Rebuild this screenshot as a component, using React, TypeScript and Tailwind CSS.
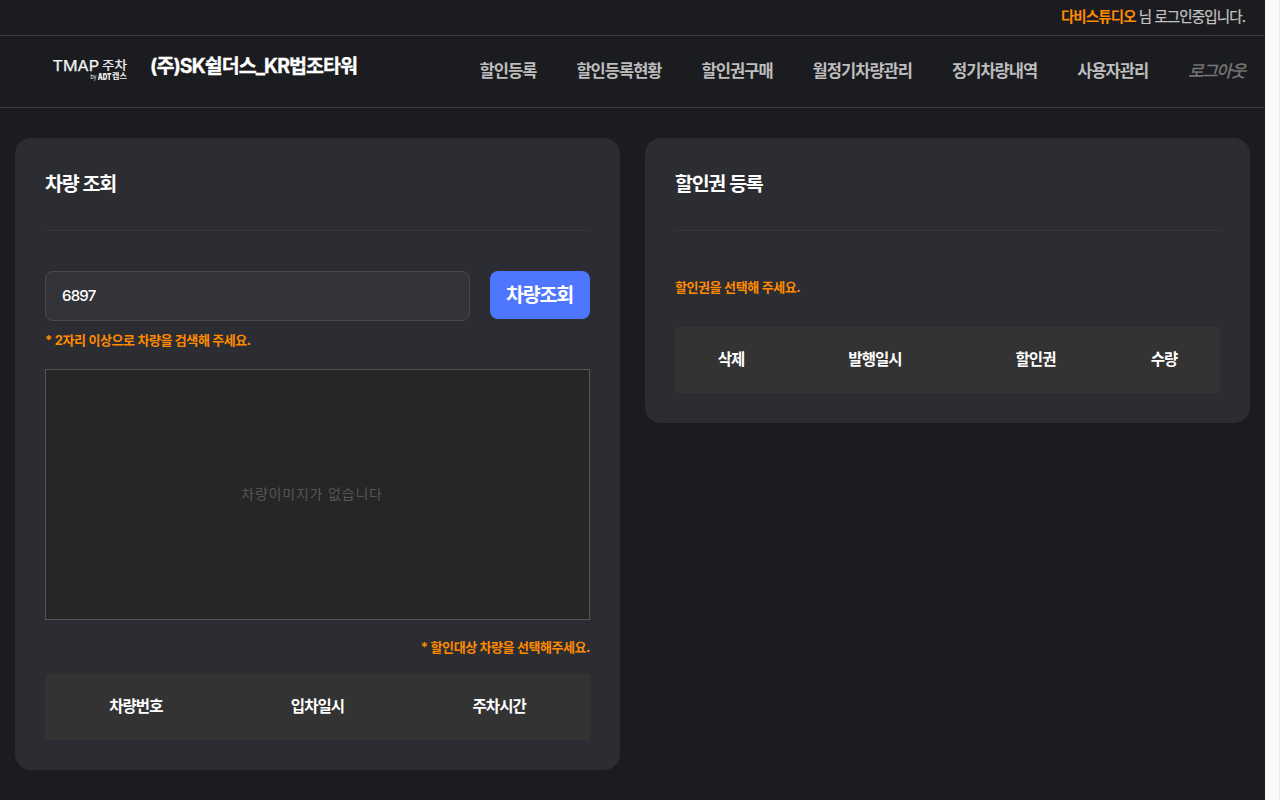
const menu = ["할인등록", "할인등록현황", "할인권구매", "월정기차량관리", "정기차량내역", "사용자관리"];

function Logo() {
  return (
    <svg width="76" height="26" viewBox="0 0 76 26" fill="#f4f4f4" role="img" aria-label="TMAP 주차">
      <text x="0.5" y="14.8" fontFamily="Inter, sans-serif" fontWeight="400" fontSize="14" textLength="46.5" lengthAdjust="spacingAndGlyphs" stroke="#f4f4f4" strokeWidth="0.25">TMAP</text>
      <text x="50" y="14.2" fontFamily="'Noto Sans CJK KR', sans-serif" fontSize="12.5" textLength="25" lengthAdjust="spacingAndGlyphs" stroke="#f4f4f4" strokeWidth="0.25">주차</text>
      <text x="38.5" y="23" fontFamily="Inter, sans-serif" fontSize="6" textLength="6" lengthAdjust="spacingAndGlyphs">by</text>
      <text x="45.8" y="23.6" fontFamily="Inter, sans-serif" fontWeight="900" fontSize="8.8" textLength="13.5" lengthAdjust="spacingAndGlyphs">ADT</text>
      <text x="60" y="23.3" fontFamily="'Noto Sans CJK KR', sans-serif" fontWeight="700" fontSize="7.8" textLength="14.8" lengthAdjust="spacingAndGlyphs">캡스</text>
    </svg>
  );
}

function PanelTitle({ children }: { children: string }) {
  return (
    <h2 className="h-[63px] border-b border-[#37383c] text-[19.5px] leading-[32px] font-bold tracking-[-1.3px] [word-spacing:0.9px] text-white">
      {children}
    </h2>
  );
}

export default function App() {
  return (
    <div className="flex h-[800px] w-[1280px] overflow-hidden bg-[#1b1c20] font-['Inter','Noto_Sans_CJK_KR',sans-serif]">
      <div className="flex w-[1265px] flex-col">
        <div className="flex h-9 items-center justify-end border-b border-[#36373a] pr-5 pb-px text-[14.5px] tracking-[-0.87px] text-[#c3c3c3]">
          <strong className="mr-[3px] font-bold text-[#ff8a00]">다비스튜디오</strong>
          <span className="[-webkit-text-stroke:0.25px_#c3c3c3]">님 로그인중입니다.</span>
        </div>
        <header className="flex h-[72px] justify-between border-b border-[#36373a] pr-5 pl-[52px]">
          <div className="flex">
            <div className="pt-5">
              <Logo />
            </div>
            <h1 className="ml-[22px] pt-[14px] text-[19.5px] leading-[32px] font-bold tracking-[-0.94px] whitespace-nowrap text-white [-webkit-text-stroke:0.3px_white]">
              (주)SK쉴더스_KR법조타워
            </h1>
          </div>
          <nav className="flex gap-[40px] pt-[22px] text-[16.5px] leading-[26px] font-bold tracking-[-0.98px] whitespace-nowrap text-[#bdbdbd]">
            {menu.map((item) => (
              <a key={item}>{item}</a>
            ))}
            <a className="font-normal text-[#777] italic [-webkit-text-stroke:0.4px_#777]">로그아웃</a>
          </nav>
        </header>
        <main className="flex items-start gap-[25px] px-[15px] pt-[30px]">
          <section className="flex h-[632px] w-[605px] flex-col rounded-2xl bg-[#2c2d32] p-[30px]">
            <PanelTitle>차량 조회</PanelTitle>
            <div className="mt-10 flex gap-5">
              <input
                defaultValue="6897"
                className="h-[50px] w-[425px] rounded-lg border border-[#4a4a4b] bg-[#333439] px-4 pb-0.5 text-[15px] font-medium tracking-[-0.8px] text-white outline-none"
              />
              <button className="h-12 w-[100px] rounded-lg bg-[#4e76ff] pt-0.5 pr-px text-[19.5px] font-bold tracking-[-1.24px] text-white">
                차량조회
              </button>
            </div>
            <p className="mt-[9px] h-5 text-[13px] leading-5 font-bold tracking-[-0.45px] [word-spacing:0.3px] text-[#ff8a00]">
              * 2자리 이상으로 차량을 검색해 주세요.
            </p>
            <div className="mt-[19px] flex h-[251px] items-center justify-center border border-[#555] bg-[#262626] pr-[11px] pb-0.5 text-[14px] tracking-[0.8px] text-[#555]">
              차량이미지가 없습니다
            </div>
            <p className="mt-[17px] h-5 text-right text-[13px] leading-5 font-bold tracking-[-0.45px] [word-spacing:0.3px] text-[#ff8a00]">
              * 할인대상 차량을 선택해주세요.
            </p>
            <div className="mt-[17px] grid h-[66px] grid-cols-3 items-center bg-[#333] text-center text-[15.5px] font-bold tracking-[-0.94px] text-white">
              <span>차량번호</span>
              <span>입차일시</span>
              <span>주차시간</span>
            </div>
          </section>
          <section className="flex h-[285px] w-[605px] flex-col rounded-2xl bg-[#2c2d32] p-[30px]">
            <PanelTitle>할인권 등록</PanelTitle>
            <p className="mt-[46px] h-5 text-[13px] leading-5 font-bold tracking-[-0.42px] [word-spacing:0.3px] text-[#ff8a00]">
              할인권을 선택해 주세요.
            </p>
            <div className="mt-[30px] grid h-[66px] grid-cols-[112px_176px_145px_112px] items-center bg-[#333] text-center text-[15.5px] font-bold tracking-[-0.94px] text-white">
              <span>삭제</span>
              <span>발행일시</span>
              <span>할인권</span>
              <span>수량</span>
            </div>
          </section>
        </main>
      </div>
      <div className="w-[15px] border-r border-[#e8e8e8] bg-[#fafafa]" />
    </div>
  );
}
